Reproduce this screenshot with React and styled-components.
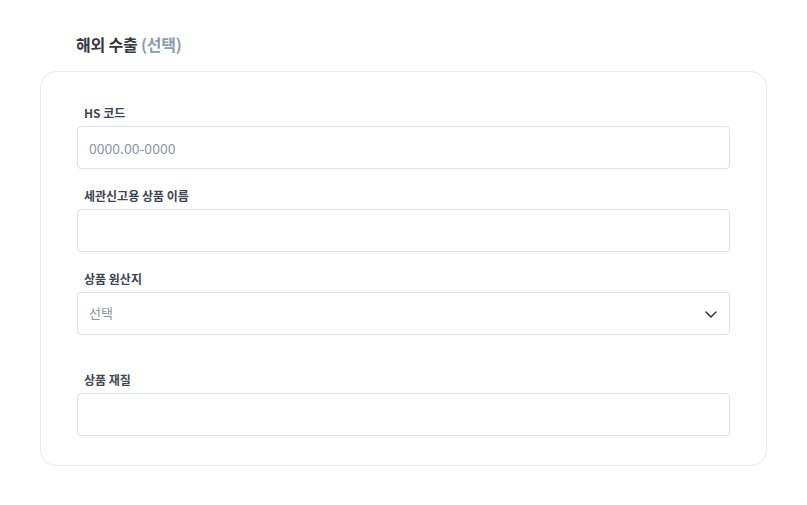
import React from "react";
import styled, { createGlobalStyle } from "styled-components";

const GlobalStyle = createGlobalStyle`
	body {
		margin: 0;
		background: #ffffff;
		font-family: "Noto Sans CJK KR", "Noto Sans", sans-serif;
	}
`;

const Page = styled.div`
	width: 727px;
	padding: 33px 0 0 40px;
`;

const Heading = styled.h2`
	margin: 0 0 16px 36px;
	font-size: 16px;
	line-height: 22px;
	font-weight: 700;
	color: #333840;
	letter-spacing: -0.2px;
`;

const Optional = styled.span`
	color: #8c9bae;
`;

const Card = styled.div`
	border: 1px solid #e9ebee;
	border-radius: 16px;
	padding: 32px 36px 29px;
	display: flex;
	flex-direction: column;
`;

const Field = styled.div`
	display: flex;
	flex-direction: column;
	margin-top: ${(p) => p.$gap ?? 0}px;
`;

const Label = styled.label`
	padding-left: 7px;
	margin-bottom: 5px;
	font-size: 12px;
	line-height: 17px;
	font-weight: 700;
	color: #3e4552;
`;

const Input = styled.input`
	box-sizing: border-box;
	height: 43px;
	width: 100%;
	border: 1px solid #dde1e6;
	border-radius: 4px;
	padding: 0 11px;
	font-family: inherit;
	font-size: 14px;
	color: #333;
	outline: none;
	&::placeholder {
		color: #8b97a5;
	}
`;

const SelectBox = styled.div`
	box-sizing: border-box;
	height: 43px;
	border: 1px solid #dde1e6;
	border-radius: 4px;
	padding: 0 11px;
	display: flex;
	align-items: center;
	justify-content: space-between;
	font-size: 13px;
	color: #8b97a5;
`;

const Placeholder = styled.span`
	margin-top: -3px;
`;

const Chevron = () => (
	<svg width="14" height="14" viewBox="0 0 14 14" fill="none">
		<path d="M2 5l5 5 5-5" stroke="#2f343b" strokeWidth="1.5" strokeLinecap="round" strokeLinejoin="round" />
	</svg>
);

export default function App() {
	return (
		<>
			<GlobalStyle />
			<Page>
				<Heading>
					해외 수출 <Optional>(선택)</Optional>
				</Heading>
				<Card>
					<Field>
						<Label>HS 코드</Label>
						<Input placeholder="0000.00-0000" />
					</Field>
					<Field $gap={18}>
						<Label>세관신고용 상품 이름</Label>
						<Input />
					</Field>
					<Field $gap={18}>
						<Label>상품 원산지</Label>
						<SelectBox>
							<Placeholder>선택</Placeholder>
							<Chevron />
						</SelectBox>
					</Field>
					<Field $gap={36}>
						<Label>상품 재질</Label>
						<Input />
					</Field>
				</Card>
			</Page>
		</>
	);
}
